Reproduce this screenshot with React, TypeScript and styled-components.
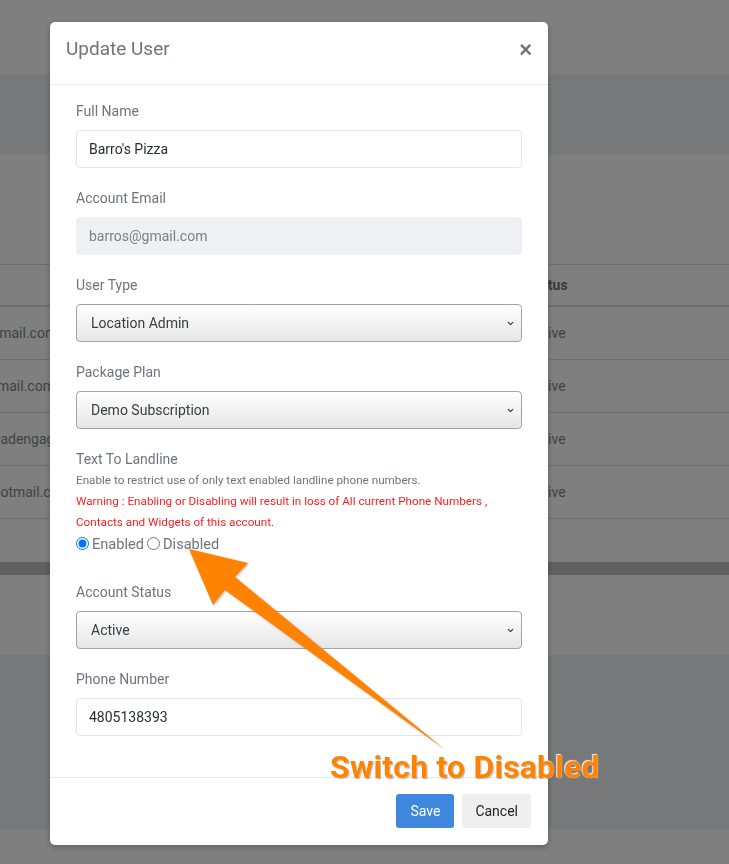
import React from "react";
import styled, { createGlobalStyle } from "styled-components";
import { ChevronDown } from "lucide-react";

const Global = createGlobalStyle`
  html, body { margin: 0; padding: 0; }
  body {
    width: 729px;
    height: 864px;
    overflow: hidden;
    background: #ffffff;
    font-family: Roboto, "Noto Sans", Arial, sans-serif;
  }
  * { box-sizing: border-box; }
`;

/* ---------- background page ---------- */
const Page = styled.div`
  display: flex;
  flex-direction: column;
  width: 729px;
  height: 864px;
  background: #ffffff;
  overflow: hidden;
`;

const Strip = styled.div<{ $h: number; $bg?: string }>`
  height: ${(p) => p.$h}px;
  flex: none;
  background: ${(p) => p.$bg ?? "#ffffff"};
`;

const Table = styled.div`
  display: flex;
  flex-direction: column;
  border-top: 1px solid #dedede;
`;

const Row = styled.div<{ $h: number; $head?: boolean }>`
  height: ${(p) => p.$h}px;
  display: grid;
  grid-template-columns: 527px 1fr;
  align-items: center;
  border-bottom: ${(p) => (p.$head ? 2 : 1)}px solid #dedede;
  font-size: 14px;
  color: ${(p) => (p.$head ? "#6e7276" : "#7d868e")};
  font-weight: ${(p) => (p.$head ? 700 : 400)};
  white-space: nowrap;
  overflow: hidden;
`;

const Cell = styled.div<{ $shift?: number }>`
  margin-left: ${(p) => p.$shift ?? 0}px;
`;

const Backdrop = styled.div`
  position: fixed;
  inset: 0;
  background: rgba(0, 0, 0, 0.5);
`;

/* ---------- modal ---------- */
const Modal = styled.div`
  position: fixed;
  left: 50px;
  top: 22px;
  width: 498px;
  background: #ffffff;
  border-radius: 5px;
  box-shadow: 0 2px 6px rgba(0, 0, 0, 0.25);
  display: flex;
  flex-direction: column;
`;

const Header = styled.div`
  height: 63px;
  display: flex;
  align-items: flex-start;
  justify-content: space-between;
  padding: 13px 16px 0 16px;
  border-bottom: 1px solid #e6e9ed;
`;

const Title = styled.h5`
  margin: 0;
  font-size: 19px;
  line-height: 27px;
  font-weight: 400;
  color: #6c757d;
`;

const Close = styled.button`
  border: 0;
  background: transparent;
  padding: 0;
  margin-top: 1px;
  font-size: 22px;
  line-height: 27px;
  font-weight: 700;
  color: #737373;
  font-family: Arial, "Liberation Sans", sans-serif;
`;

const Body = styled.div`
  padding: 16px 26px 21px;
  display: flex;
  flex-direction: column;
`;

const Group = styled.div<{ $mb?: number }>`
  display: flex;
  flex-direction: column;
  margin-bottom: ${(p) => p.$mb ?? 20}px;
`;

const Label = styled.label<{ $tight?: boolean }>`
  font-size: 14px;
  line-height: 21px;
  color: #6c757d;
  margin-bottom: ${(p) => (p.$tight ? 0 : 8)}px;
`;

const Input = styled.div<{ $disabled?: boolean }>`
  height: 38px;
  display: flex;
  align-items: center;
  padding: 0 12px;
  border: 1px solid ${(p) => (p.$disabled ? "#eef0f3" : "#e4e6e9")};
  border-radius: 4px;
  background: ${(p) => (p.$disabled ? "#eef0f3" : "#ffffff")};
  color: ${(p) => (p.$disabled ? "#7b8188" : "#2a2d30")};
  font-size: 14px;
`;

const Select = styled.div`
  position: relative;
  height: 38px;
  display: flex;
  align-items: center;
  padding: 0 14px;
  border: 1px solid #a3a3a3;
  border-radius: 4px;
  background: linear-gradient(#ffffff, #e6e6e6);
  color: #3a3d40;
  font-size: 14px;
`;

const Chevron = styled(ChevronDown)`
  position: absolute;
  right: 6px;
  top: 50%;
  margin-top: -4px;
  width: 9px;
  height: 9px;
  color: #333;
`;

const Help = styled.div<{ $warn?: boolean }>`
  font-size: 11.7px;
  line-height: 21px;
  color: ${(p) => (p.$warn ? "#ff1e1e" : "#6c757d")};
`;

const RadioRow = styled.div`
  display: flex;
  align-items: center;
  height: 21px;
  font-size: 14.6px;
  color: #6c757d;
`;

const Radio = styled.input`
  margin: 0 3px 0 0;
  width: 13px;
  height: 13px;
`;

const RadioLabel = styled.span`
  margin-right: 3px;
`;

const Footer = styled.div`
  display: flex;
  justify-content: flex-end;
  gap: 8px;
  padding: 16px 17px 17px;
  border-top: 1px solid #e6e9ed;
`;

const Button = styled.button<{ $primary?: boolean }>`
  height: 34px;
  min-width: 58px;
  padding: 0 13px;
  border: 0;
  border-radius: 3px;
  font-family: inherit;
  font-size: 14px;
  background: ${(p) => (p.$primary ? "#3f88de" : "#efefef")};
  color: ${(p) => (p.$primary ? "#ffffff" : "#222222")};
`;

/* ---------- annotation ---------- */
const ArrowSvg = styled.svg`
  position: fixed;
  left: 0;
  top: 0;
  width: 729px;
  height: 864px;
  pointer-events: none;
  filter: drop-shadow(1px 1px 1px rgba(0, 0, 0, 0.25));
`;

const Callout = styled.span`
  position: fixed;
  left: 330px;
  top: 751px;
  font-family: Roboto, "Liberation Sans", sans-serif;
  font-weight: 700;
  font-size: 32px;
  line-height: 32px;
  letter-spacing: 0.2px;
  color: #ff8200;
  white-space: nowrap;
  text-shadow: 0 0 1px #ffffff, 1px 1px 1px rgba(120, 120, 120, 0.6), -1px -1px 1px rgba(255, 255, 255, 0.9);
`;

const rows = [
  { email: "john@gmail.com", shift: -48 },
  { email: "dave@gmail.com", shift: -53 },
  { email: "info@leadengage.com", shift: -47 },
  { email: "sam@hotmail.com", shift: -47 },
];

export default function App() {
  return (
    <>
      <Global />
      <Page>
        <Strip $h={74} />
        <Strip $h={80} $bg="#eef0f4" />
        <Strip $h={110} />
        <Table>
          <Row $h={42} $head>
            <Cell $shift={70}>Email</Cell>
            <Cell>Status</Cell>
          </Row>
          {rows.map((r) => (
            <Row key={r.email} $h={53}>
              <Cell $shift={r.shift}>{r.email}</Cell>
              <Cell>Active</Cell>
            </Row>
          ))}
        </Table>
        <Strip $h={43} />
        <Strip $h={13} $bg="#c0c0c0" />
        <Strip $h={80} />
        <Strip $h={174} $bg="#eef0f4" />
        <Strip $h={34} />
      </Page>
      <Backdrop />
      <Modal>
        <Header>
          <Title>Update User</Title>
          <Close>×</Close>
        </Header>
        <Body>
          <Group>
            <Label>Full Name</Label>
            <Input>Barro's Pizza</Input>
          </Group>
          <Group>
            <Label>Account Email</Label>
            <Input $disabled>barros@gmail.com</Input>
          </Group>
          <Group>
            <Label>User Type</Label>
            <Select>
              Location Admin
              <Chevron strokeWidth={3} />
            </Select>
          </Group>
          <Group>
            <Label>Package Plan</Label>
            <Select>
              Demo Subscription
              <Chevron strokeWidth={3} />
            </Select>
          </Group>
          <Group $mb={28}>
            <Label $tight>Text To Landline</Label>
            <Help>Enable to restrict use of only text enabled landline phone numbers.</Help>
            <Help $warn>Warning : Enabling or Disabling will result in loss of All current Phone Numbers ,</Help>
            <Help $warn>Contacts and Widgets of this account.</Help>
            <RadioRow>
              <Radio type="radio" name="ttl" defaultChecked />
              <RadioLabel>Enabled</RadioLabel>
              <Radio type="radio" name="ttl" />
              <RadioLabel>Disabled</RadioLabel>
            </RadioRow>
          </Group>
          <Group>
            <Label>Account Status</Label>
            <Select>
              Active
              <Chevron strokeWidth={3} />
            </Select>
          </Group>
          <Group>
            <Label>Phone Number</Label>
            <Input>4805138393</Input>
          </Group>
        </Body>
        <Footer>
          <Button $primary>Save</Button>
          <Button>Cancel</Button>
        </Footer>
      </Modal>
      <ArrowSvg viewBox="0 0 729 864">
        <polygon
          points="189,549 248,563 235,577 444,749 225,590 213,605"
          fill="#ff8200"
        />
      </ArrowSvg>
      <Callout>Switch to Disabled</Callout>
    </>
  );
}
